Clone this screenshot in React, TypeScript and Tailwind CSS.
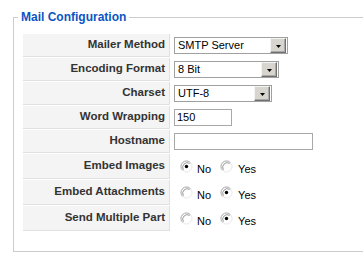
import React from "react";

const FONT = { fontFamily: '"Liberation Sans", Arial, sans-serif' };

function Select({ value, width }: { value: string; width: string }) {
  return (
    <div className={`flex h-[17px] items-center border border-[#a0a0a0] bg-white ${width}`}>
      <span className="flex-1 pl-[3px] text-[11px] leading-none text-black">{value}</span>
      <div className="mr-[1px] flex h-[15px] w-[16px] items-center justify-center border border-t-[#f4f4f4] border-l-[#f4f4f4] border-r-[#707070] border-b-[#707070] bg-[#d8d5cf] shadow-[inset_-1px_-1px_0_#a8a8a8]">
        <svg width="5" height="3" viewBox="0 0 5 3" className="mt-[1px]">
          <path d="M0 0h5L2.5 3z" fill="#000" />
        </svg>
      </div>
    </div>
  );
}

function TextInput({ value, width }: { value: string; width: string }) {
  return (
    <div className={`flex h-[17px] items-center border border-[#a8a8a8] bg-white pl-[2px] text-[11px] leading-none text-black ${width}`}>
      {value}
    </div>
  );
}

function Radio({ checked }: { checked: boolean }) {
  return (
    <svg width="13" height="13" viewBox="0 0 13 13" className="shrink-0">
      <circle cx="6.5" cy="6.5" r="5.5" fill="#fff" stroke="#e8e8e8" />
      <path d="M2.6 10.4A5.5 5.5 0 0 1 10.4 2.6" stroke="#b0b0b0" fill="none" />
      <path d="M3.4 9.6A4.5 4.5 0 0 1 9.6 3.4" stroke="#6a6a6a" strokeWidth="0.7" fill="none" />
      {checked && <circle cx="6.5" cy="6.5" r="1.7" fill="#000" />}
    </svg>
  );
}

function Radios({ yes }: { yes: boolean }) {
  return (
    <div className="flex items-center pl-[9px] text-[11px] leading-none text-black">
      <Radio checked={!yes} />
      <span className="ml-[4px] mt-[6px]">No</span>
      <span className="ml-[9px]">
        <Radio checked={yes} />
      </span>
      <span className="ml-[5px] mt-[6px]">Yes</span>
    </div>
  );
}

function Row({ label, tall, children }: { label: string; tall?: boolean; children: React.ReactNode }) {
  return (
    <div className="flex gap-[1px]">
      <div
        className={`flex w-[147px] items-center justify-end border-b border-r border-[#e0e0e0] bg-[#f4f4f4] pr-[4px] text-[11.5px] font-bold leading-none text-[#333] ${
          tall ? "h-[25px]" : "h-[23px]"
        }`}
      >
        {label}
      </div>
      <div className={`flex items-center ${tall ? "h-[25px]" : "h-[23px]"}`}>{children}</div>
    </div>
  );
}

export default function App() {
  return (
    <div className="h-[266px] w-[363px] overflow-hidden bg-white" style={FONT}>
      <fieldset className="ml-[13px] mt-[10px] w-[420px] border border-[#cccccc] pb-[20px] pl-[9px] pr-[9px] pt-[10px]">
        <legend className="ml-[-5px] px-[3px] text-[12px] font-bold leading-[14px] text-[#0b55c4]">
          Mail Configuration
        </legend>
        <div className="flex flex-col gap-[1px]">
          <Row label="Mailer Method">
            <div className="pl-[3px]">
              <Select value="SMTP Server" width="w-[114px]" />
            </div>
          </Row>
          <Row label="Encoding Format">
            <div className="pl-[3px]">
              <Select value="8 Bit" width="w-[105px]" />
            </div>
          </Row>
          <Row label="Charset">
            <div className="pl-[3px]">
              <Select value="UTF-8" width="w-[98px]" />
            </div>
          </Row>
          <Row label="Word Wrapping">
            <div className="pl-[3px]">
              <TextInput value="150" width="w-[58px]" />
            </div>
          </Row>
          <Row label="Hostname">
            <div className="pl-[3px]">
              <TextInput value="" width="w-[139px]" />
            </div>
          </Row>
          <Row label="Embed Images" tall>
            <Radios yes={false} />
          </Row>
          <Row label="Embed Attachments" tall>
            <Radios yes={true} />
          </Row>
          <Row label="Send Multiple Part" tall>
            <Radios yes={true} />
          </Row>
        </div>
      </fieldset>
    </div>
  );
}
